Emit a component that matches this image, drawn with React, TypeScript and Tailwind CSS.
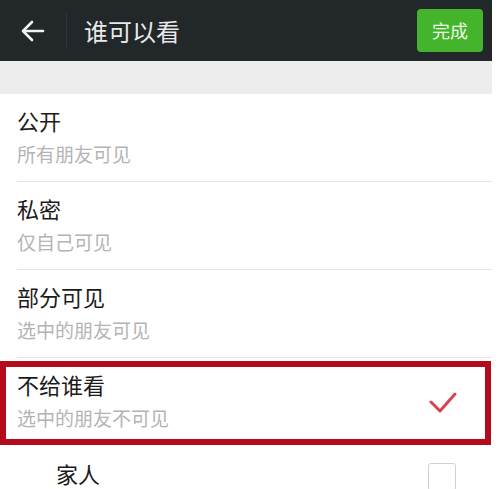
import React from "react";

const font = { fontFamily: '"Noto Sans CJK SC", "Noto Sans", sans-serif' };

function Row({ title, sub }: { title: string; sub: string }) {
  return (
    <div className="pl-[17px]">
      <div className="pt-[12px] pb-[15px] border-b border-[#e3e3e3]">
        <div className="text-[22px] leading-[28px] text-[#1b1b1b]">{title}</div>
        <div className="mt-[8px] text-[19px] leading-[24px] text-[#b4b4b4]">{sub}</div>
      </div>
    </div>
  );
}

export default function App() {
  return (
    <div className="w-[500px] h-[489px] bg-white overflow-hidden" style={font}>
      <div className="w-[492px]">
        <div className="h-[61px] bg-[#22272a] flex items-center">
          <div className="w-[66px] flex items-center pl-[21px]">
            <svg width="24" height="22" viewBox="0 0 24 22" fill="none" stroke="#f2f2f2" strokeWidth="2.6" strokeLinecap="round" strokeLinejoin="round">
              <path d="M22 11H3" />
              <path d="M11 2L2 11l9 9" />
            </svg>
          </div>
          <div className="w-px h-[36px] bg-[#30363a]" />
          <div className="ml-[17px] text-[24px] leading-[30px] text-[#e9e9e9] flex-1">谁可以看</div>
          <div className="mr-[9px] w-[66px] h-[43px] rounded-[4px] bg-[#43b42c] flex items-center justify-center text-[18px] text-[#eef8e8]">
            完成
          </div>
        </div>
        <div className="h-[33px] bg-[#ededed]" />
        <Row title="公开" sub="所有朋友可见" />
        <Row title="私密" sub="仅自己可见" />
        <Row title="部分可见" sub="选中的朋友可见" />
        <div className="relative">
          <div className="pl-[17px] pr-[35px] flex items-center">
            <div className="flex-1 pt-[12px] pb-[16px]">
              <div className="text-[22px] leading-[28px] text-[#1b1b1b]">不给谁看</div>
              <div className="mt-[8px] text-[19px] leading-[24px] text-[#b4b4b4]">选中的朋友不可见</div>
            </div>
            <svg width="28" height="22" viewBox="0 0 28 22" fill="none" stroke="#d9434f" strokeWidth="3" strokeLinecap="round" strokeLinejoin="round">
              <path d="M2 11l9 9L26 3" />
            </svg>
          </div>
          <div className="absolute left-0 top-[3px] right-[1px] h-[84px] border-[6px] border-[#b30a1c]" />
        </div>
        <div className="pl-[56px] pr-[36px] pt-[13px] flex items-start justify-between">
          <div className="text-[22px] leading-[28px] text-[#1b1b1b]">家人</div>
          <div className="mt-[4px] w-[28px] h-[28px] rounded-[3px] border border-[#d0d0d0]" />
        </div>
      </div>
    </div>
  );
}
